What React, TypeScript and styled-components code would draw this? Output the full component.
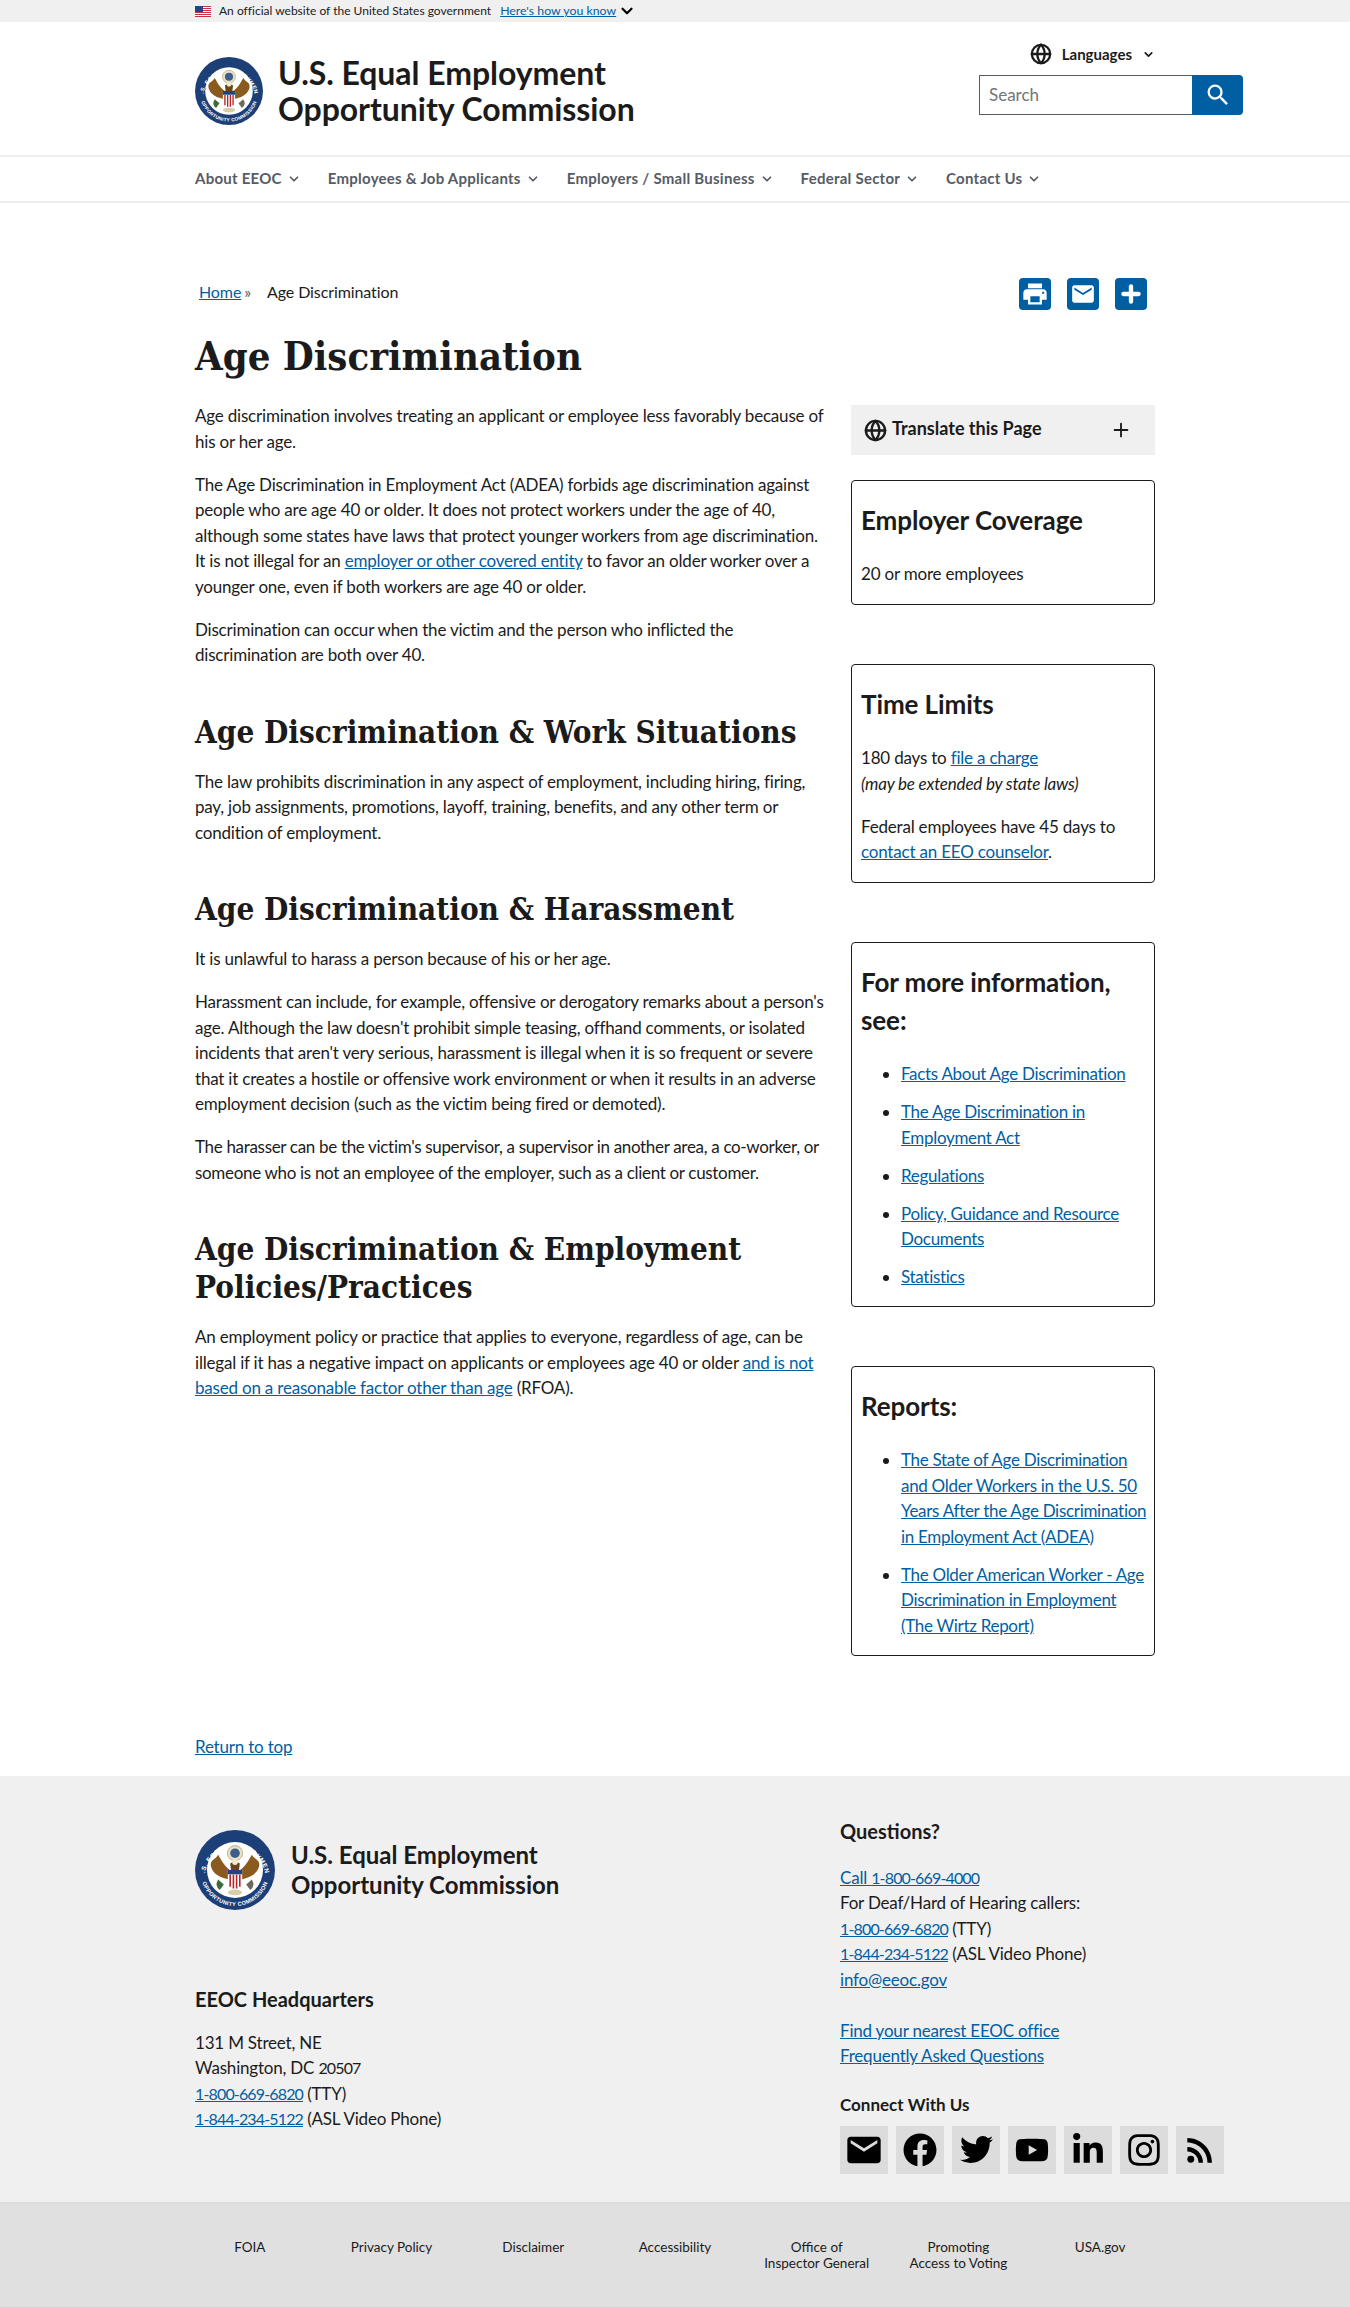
import React from "react";
import styled, { createGlobalStyle } from "styled-components";
import { Globe, Plus, ChevronDown } from "lucide-react";
import { MdPrint, MdEmail, MdSearch, MdRssFeed } from "react-icons/md";
import { FaFacebook, FaTwitter, FaYoutube, FaLinkedinIn, FaInstagram } from "react-icons/fa";

const sans = `"Lato", "Liberation Sans", sans-serif`;
const serif = `"DejaVu Serif Condensed", "DejaVu Serif", serif`;

const Global = createGlobalStyle`
  html, body { margin: 0; padding: 0; background: #fff; }
  body { font-family: ${sans}; color: #1b1b1b; font-size: 17px; line-height: 25.5px; letter-spacing: -0.2px; }
  a { color: #005ea2; }
  * { box-sizing: border-box; }
`;

const Banner = styled.div`
  height: 22px; background: #f0f0f0; padding-left: 195px; display: flex; align-items: center;
  font-size: 12px; line-height: 22px; gap: 8px; letter-spacing: 0.01px;
`;
const BannerLink = styled.a`font-size: 12.3px; margin-left: 1px;`;
const Header = styled.header`
  height: 133px; padding: 0 107px 0 195px; display: flex; justify-content: space-between;
`;
const Brand = styled.div`display: flex; align-items: center; gap: 15px; padding-top: 5px;`;
const BrandName = styled.div`font-size: 32px; line-height: 36px; font-weight: 700; letter-spacing: -0.05px;`;
const Tools = styled.div`display: flex; flex-direction: column; align-items: flex-end; padding-top: 21px;`;
const Languages = styled.div`
  display: flex; align-items: center; gap: 10px; font-size: 15px; font-weight: 700; line-height: 22px;
  margin-right: 88px; margin-bottom: 10px; letter-spacing: 0;
`;
const SearchBox = styled.div`display: flex; height: 40px;`;
const SearchInput = styled.div`
  width: 213px; border: 1px solid #565c65; border-right: 0; color: #71767a; font-size: 17px;
  line-height: 38px; padding-left: 9px; letter-spacing: 0;
`;
const SearchButton = styled.div`
  width: 51px; background: #005ea2; color: #fff; border-radius: 0 4px 4px 0; display: flex;
  align-items: center; justify-content: center;
`;
const Nav = styled.nav`
  height: 48px; border-top: 2px solid #eee; border-bottom: 2px solid #eee; padding-left: 195px;
  display: flex; align-items: center; gap: 27px;
`;
const NavItem = styled.span`
  display: inline-flex; align-items: center; gap: 5px; font-size: 15px; font-weight: 700; color: #565c65;
  letter-spacing: 0.25px;
`;
const Main = styled.main`width: 960px; margin-left: 195px; padding-top: 75px;`;
const TopRow = styled.div`display: flex; justify-content: space-between; align-items: center; height: 32px;`;
const Breadcrumb = styled.div`display: flex; font-size: 16px; padding-left: 4px; margin-top: -5px; letter-spacing: -0.1px;`;
const Sep = styled.span`color: #555; margin: 0 16px 0 3px;`;
const Shares = styled.div`display: flex; gap: 16px; margin-right: 8px;`;
const ShareButton = styled.div`
  width: 32px; height: 32px; background: #005ea2; color: #fff; border-radius: 4px; display: flex;
  align-items: center; justify-content: center;
`;
const Title = styled.h1`
  font-family: ${serif}; font-size: 39.7px; line-height: 48px; font-weight: 700; margin: 22px 0 23px;
  letter-spacing: 0;
`;
const Columns = styled.div`display: grid; grid-template-columns: 634px 304px; justify-content: space-between;`;
const Para = styled.p<{ $tight?: boolean }>`
  margin: 0 0 17.5px;
  letter-spacing: ${(p) => (p.$tight ? "-0.32px" : "inherit")};
`;
const H2 = styled.h2`
  font-family: ${serif}; font-size: 31.2px; line-height: 38px; font-weight: 700; margin: 45px 0 18px;
  letter-spacing: 0;
`;
const Aside = styled.aside`display: flex; flex-direction: column; padding-top: 2px;`;
const Translate = styled.div`
  height: 50px; background: #f0f0f0; display: flex; align-items: center; padding: 0 23px 0 13px;
  font-weight: 700; font-size: 18px; gap: 5px; margin-bottom: 25px; letter-spacing: 0;
`;
const TranslateLabel = styled.span`flex: 1; padding-bottom: 2px;`;
const Box = styled.section`
  border: 1px solid #1b1b1b; border-radius: 4px; padding: 20px 4px 0 9px; margin-bottom: 59px;
`;
const BoxTitle = styled.h3`font-size: 26px; line-height: 38px; font-weight: 700; margin: 0 0 22px; letter-spacing: -0.1px;`;
const List = styled.ul`margin: 0; padding: 0 0 4px 40px; letter-spacing: -0.3px;`;
const Item = styled.li`margin-bottom: 12.5px;`;
const BackTop = styled.div`margin-top: 19px; height: 42px;`;
const Footer = styled.footer`
  height: 426px; background: #f0f0f0; padding: 54px 126px 0 195px; display: flex; justify-content: space-between;
`;
const FootLeft = styled.div`display: flex; flex-direction: column;`;
const FootBrand = styled.div`display: flex; align-items: center; gap: 16px;`;
const FootName = styled.div`font-size: 24px; line-height: 30px; font-weight: 700; letter-spacing: 0;`;
const FootHead = styled.h4`font-size: 20px; line-height: 30px; font-weight: 700; margin: 74px 0 16px; letter-spacing: 0;`;
const FootRight = styled.div`width: 384px;`;
const Questions = styled.h4`font-size: 20px; line-height: 30px; font-weight: 700; margin: -14px 0 19px; letter-spacing: 0;`;
const Gap = styled.div`margin-bottom: 25.5px;`;
const Connect = styled.h5`font-size: 17px; line-height: 25px; font-weight: 700; margin: 23px 0 9px; letter-spacing: 0;`;
const Socials = styled.div`display: flex; gap: 8px;`;
const Social = styled.div`
  width: 48px; height: 48px; background: #dcdcdc; color: #000; display: flex; align-items: center; justify-content: center;
`;
const Numeric = styled.span`font-size: 16px; letter-spacing: -0.85px;`;
const SubFooter = styled.div`
  height: 106px; background: #e0e0e0; border-top: 2px solid #dcdcdc; padding: 35px 179px 0;
  display: grid; grid-template-columns: repeat(7, 1fr); font-size: 13.5px; line-height: 16px; text-align: center;
  letter-spacing: 0; align-content: start;
`;

const Seal = ({ size }: { size: number }) => (
  <svg width={size} height={size} viewBox="0 0 100 100" aria-label="EEOC seal">
    <defs>
      <path id="sealTop" d="M12 56 A38.5 38.5 0 0 1 88 56" fill="none" />
      <path id="sealBottom" d="M7 52 A43 43 0 0 0 93 52" fill="none" />
    </defs>
    <circle cx="50" cy="50" r="50" fill="#1d3f77" />
    <circle cx="50" cy="50" r="35" fill="#fff" />
    <text fontFamily="Liberation Sans" fontWeight="700" fontSize="8" fill="#fff" letterSpacing="0.6">
      <textPath href="#sealTop" startOffset="50%" textAnchor="middle">U.S. EQUAL EMPLOYMENT</textPath>
    </text>
    <text fontFamily="Liberation Sans" fontWeight="700" fontSize="7" fill="#fff" letterSpacing="0.4">
      <textPath href="#sealBottom" startOffset="50%" textAnchor="middle">OPPORTUNITY COMMISSION</textPath>
    </text>
    <circle cx="50" cy="29" r="9.5" fill="#e8e2c8" stroke="#b9a36a" />
    <circle cx="50" cy="29" r="6" fill="#3c5f8a" />
    <path d="M47 52 C38 48 33 38 29 31 C25 38 18 37 20 46 C23 56 33 60 43 62Z" fill="#8a5a1e" />
    <path d="M53 52 C62 48 67 38 71 31 C75 38 82 37 80 46 C77 56 67 60 57 62Z" fill="#8a5a1e" />
    <path d="M44 42 Q50 37 56 42 L55 50 L45 50Z" fill="#6b4517" />
    <circle cx="50" cy="40" r="3.6" fill="#efe8d2" />
    <path d="M41 50 H59 V63 Q59 71 50 74 Q41 71 41 63Z" fill="#fff" />
    <rect x="41" y="50" width="18" height="5.5" fill="#27427a" />
    <path d="M44 56 V71 M48 56 V73 M52 56 V73 M56 56 V71" stroke="#b3262c" strokeWidth="2" />
    <path d="M29 62 Q24 70 31 75 L36 68Z" fill="#3d6b3a" />
    <path d="M71 62 Q76 70 69 75 L64 68Z" fill="#6c6a5a" />
    <ellipse cx="50" cy="78" rx="9" ry="3.5" fill="#d8cfa6" />
  </svg>
);

const Flag = () => (
  <svg width="16" height="11" viewBox="0 0 16 11">
    <rect width="16" height="11" fill="#fff" />
    {[0, 2, 4, 6, 8, 10].map((y) => <rect key={y} y={y} width="16" height="1" fill="#c8313e" />)}
    <rect width="8" height="6" fill="#2a3f8f" />
  </svg>
);

export default function App() {
  return (
    <>
      <Global />
      <Banner>
        <Flag />
        <span>An official website of the United States government</span>
        <BannerLink href="#">Here's how you know</BannerLink>
        <ChevronDown size={18} strokeWidth={3} color="#000" style={{ marginLeft: -6 }} />
      </Banner>
      <Header>
        <Brand>
          <Seal size={68} />
          <BrandName>U.S. Equal Employment<br />Opportunity Commission</BrandName>
        </Brand>
        <Tools>
          <Languages><Globe size={22} strokeWidth={2.5} />Languages<ChevronDown size={13} strokeWidth={3} /></Languages>
          <SearchBox>
            <SearchInput>Search</SearchInput>
            <SearchButton><MdSearch size={28} /></SearchButton>
          </SearchBox>
        </Tools>
      </Header>
      <Nav>
        {["About EEOC", "Employees & Job Applicants", "Employers / Small Business", "Federal Sector", "Contact Us"].map((t) => (
          <NavItem key={t}>{t}<ChevronDown size={14} strokeWidth={3} /></NavItem>
        ))}
      </Nav>
      <Main>
        <TopRow>
          <Breadcrumb><a href="#">Home</a><Sep>»</Sep><span>Age Discrimination</span></Breadcrumb>
          <Shares>
            <ShareButton><MdPrint size={28} /></ShareButton>
            <ShareButton><MdEmail size={26} /></ShareButton>
            <ShareButton><Plus size={26} strokeWidth={4} /></ShareButton>
          </Shares>
        </TopRow>
        <Title>Age Discrimination</Title>
        <Columns>
          <div>
            <Para>Age discrimination involves treating an applicant or employee less favorably because of his or her age.</Para>
            <Para>The Age Discrimination in Employment Act (ADEA) forbids age discrimination against people who are age 40 or older. It does not protect workers under the age of 40, although some states have laws that protect younger workers from age discrimination. It is not illegal for an <a href="#">employer or other covered entity</a> to favor an older worker over a younger one, even if both workers are age 40 or older.</Para>
            <Para>Discrimination can occur when the victim and the person who inflicted the discrimination are both over 40.</Para>
            <H2>Age Discrimination &amp; Work Situations</H2>
            <Para>The law prohibits discrimination in any aspect of employment, including hiring, firing, pay, job assignments, promotions, layoff, training, benefits, and any other term or condition of employment.</Para>
            <H2>Age Discrimination &amp; Harassment</H2>
            <Para>It is unlawful to harass a person because of his or her age.</Para>
            <Para>Harassment can include, for example, offensive or derogatory remarks about a person's age. Although the law doesn't prohibit simple teasing, offhand comments, or isolated incidents that aren't very serious, harassment is illegal when it is so frequent or severe that it creates a hostile or offensive work environment or when it results in an adverse employment decision (such as the victim being fired or demoted).</Para>
            <Para $tight>The harasser can be the victim's supervisor, a supervisor in another area, a co-worker, or someone who is not an employee of the employer, such as a client or customer.</Para>
            <H2>Age Discrimination &amp; Employment Policies/Practices</H2>
            <Para>An employment policy or practice that applies to everyone, regardless of age, can be illegal if it has a negative impact on applicants or employees age 40 or older <a href="#">and is not based on a reasonable factor other than age</a> (RFOA).</Para>
          </div>
          <Aside>
            <Translate><Globe size={23} strokeWidth={2.5} /><TranslateLabel>Translate this Page</TranslateLabel><Plus size={22} strokeWidth={2} /></Translate>
            <Box>
              <BoxTitle>Employer Coverage</BoxTitle>
              <Para>20 or more employees</Para>
            </Box>
            <Box>
              <BoxTitle>Time Limits</BoxTitle>
              <Para>180 days to <a href="#">file a charge</a><br /><em>(may be extended by state laws)</em></Para>
              <Para>Federal employees have 45 days to <a href="#">contact an EEO counselor</a>.</Para>
            </Box>
            <Box>
              <BoxTitle>For more information, see:</BoxTitle>
              <List>
                <Item><a href="#">Facts About Age Discrimination</a></Item>
                <Item><a href="#">The Age Discrimination in<br />Employment Act</a></Item>
                <Item><a href="#">Regulations</a></Item>
                <Item><a href="#">Policy, Guidance and Resource<br />Documents</a></Item>
                <Item><a href="#">Statistics</a></Item>
              </List>
            </Box>
            <Box>
              <BoxTitle>Reports:</BoxTitle>
              <List>
                <Item><a href="#">The State of Age Discrimination<br />and Older Workers in the U.S. 50<br />Years After the Age Discrimination<br />in Employment Act (ADEA)</a></Item>
                <Item><a href="#">The Older American Worker - Age<br />Discrimination in Employment<br />(The Wirtz Report)</a></Item>
              </List>
            </Box>
          </Aside>
        </Columns>
        <BackTop><a href="#">Return to top</a></BackTop>
      </Main>
      <Footer>
        <FootLeft>
          <FootBrand>
            <Seal size={80} />
            <FootName>U.S. Equal Employment<br />Opportunity Commission</FootName>
          </FootBrand>
          <FootHead>EEOC Headquarters</FootHead>
          <div>131 M Street, NE<br />Washington, DC <Numeric>20507</Numeric><br /><a href="#"><Numeric>1-800-669-6820</Numeric></a> (TTY)<br /><a href="#"><Numeric>1-844-234-5122</Numeric></a> (ASL Video Phone)</div>
        </FootLeft>
        <FootRight>
          <Questions>Questions?</Questions>
          <Gap><a href="#">Call <Numeric>1-800-669-4000</Numeric></a><br />For Deaf/Hard of Hearing callers:<br /><a href="#"><Numeric>1-800-669-6820</Numeric></a> (TTY)<br /><a href="#"><Numeric>1-844-234-5122</Numeric></a> (ASL Video Phone)<br /><a href="#">info@eeoc.gov</a></Gap>
          <div><a href="#">Find your nearest EEOC office</a><br /><a href="#">Frequently Asked Questions</a></div>
          <Connect>Connect With Us</Connect>
          <Socials>
            <Social><MdEmail size={40} /></Social>
            <Social><FaFacebook size={34} /></Social>
            <Social><FaTwitter size={33} /></Social>
            <Social><FaYoutube size={34} /></Social>
            <Social><FaLinkedinIn size={34} /></Social>
            <Social><FaInstagram size={36} /></Social>
            <Social><MdRssFeed size={38} /></Social>
          </Socials>
        </FootRight>
      </Footer>
      <SubFooter>
        <div>FOIA</div><div>Privacy Policy</div><div>Disclaimer</div><div>Accessibility</div>
        <div>Office of<br />Inspector General</div><div>Promoting<br />Access to Voting</div><div>USA.gov</div>
      </SubFooter>
    </>
  );
}
